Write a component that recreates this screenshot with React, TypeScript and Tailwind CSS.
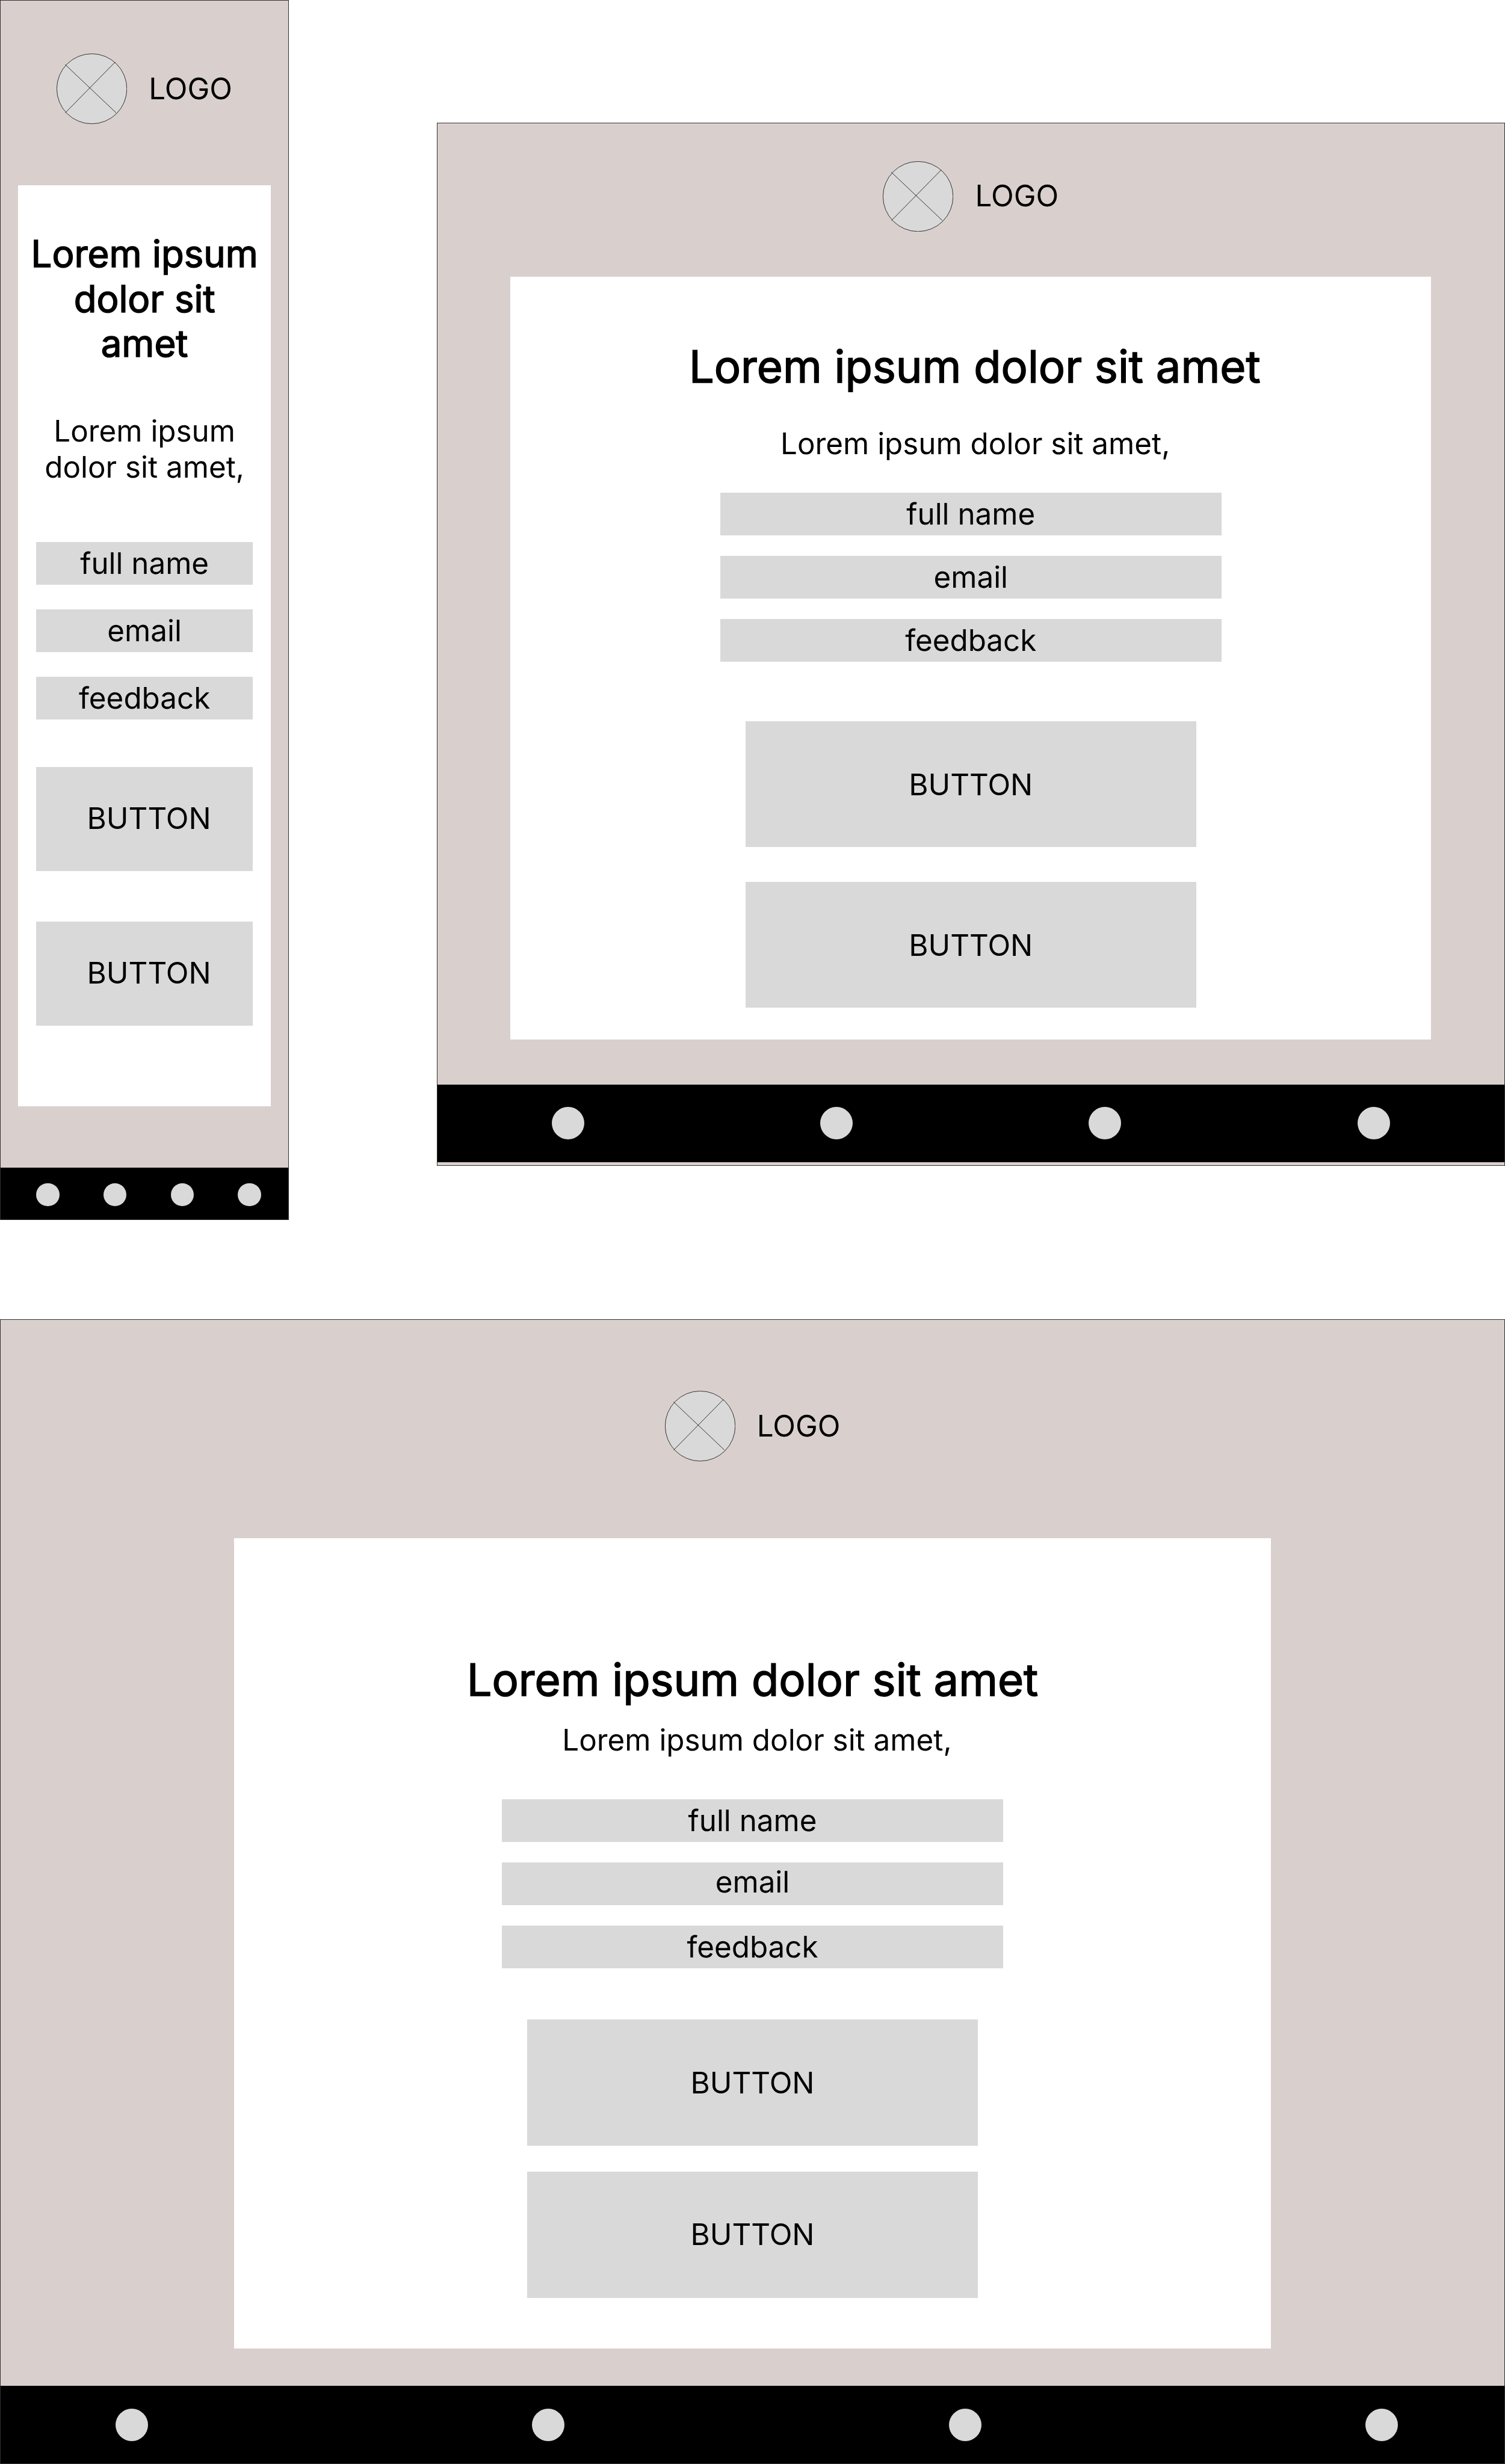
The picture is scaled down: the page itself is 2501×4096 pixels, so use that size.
type ScreenClasses = {
  frame: string;
  header: string;
  card: string;
  title: string;
  text: string;
  fields: string;
  buttons: string;
  button: string;
  footer: string;
  dot: string;
  labels: [string, string, string];
};

const mobile: ScreenClasses = {
  frame: "w-[480.3px] h-[2027.6px]",
  header: "h-[308.4px] pt-[89.4px]",
  card: "w-[420.2px] h-[1531.1px] pt-[76.7px]",
  title: "w-[384px] text-[61.68px] leading-[74.63px]",
  text: "mt-[78px] w-[360px]",
  fields: "mt-[94.8px] w-[360px] gap-[40.9px]",
  buttons: "mt-[79.4px] w-[360px] gap-[84.6px]",
  button: "h-[172.8px] pl-[15px] pb-[1px]",
  footer: "mt-[101.8px] h-[86.3px] pt-[25.4px] pl-[60.1px] gap-[73.3px]",
  dot: "size-[38.5px]",
  labels: ["pt-[1px]", "pt-[1px]", "pt-[1px]"],
};

const tablet: ScreenClasses = {
  frame: "mt-[203.5px] w-[1775.5px] h-[1734.7px]",
  header: "h-[256px] pt-[64px]",
  card: "w-[1529.6px] h-[1268.2px] pt-[105.6px]",
  title: "pl-[13px] text-[74.01px] leading-[89.6px]",
  text: "mt-[53px] pl-[15px]",
  fields: "mt-[52px] w-[832.6px] gap-[33.9px]",
  buttons: "mt-[99px] w-[749.4px] gap-[57.5px]",
  button: "h-[209.5px] pt-[3px]",
  footer: "mt-[75.1px] h-[129.4px] pt-[37.5px] pl-[191.2px] gap-[392.4px]",
  dot: "size-[54px]",
  labels: ["pt-[1px]", "pt-[1px]", "pt-[1px]"],
};

const desktop: ScreenClasses = {
  frame: "mt-[165.8px] w-full h-[1902.6px]",
  header: "h-[363.7px] pt-[119px]",
  card: "w-[1723.9px] h-[1347.1px] pt-[190.6px]",
  title: "text-[74.01px] leading-[89.6px]",
  text: "mt-[25.3px] pl-[15px]",
  fields: "mt-[69px] w-[832.6px] gap-[33.9px]",
  buttons: "mt-[85.5px] w-[749.4px] gap-[43.2px]",
  button: "h-[209.6px] pt-[1px]",
  footer: "mt-[61.6px] h-[130.2px] pt-[37.8px] pl-[192px] gap-[638.4px]",
  dot: "size-[54px]",
  labels: ["pt-[1px]", "pb-[5px]", "pt-[1px]"],
};

function Logo() {
  return (
    <div className="flex w-[292px] items-start">
      <svg viewBox="0 0 152 152" className="size-[117.2px] shrink-0" stroke="#000" strokeWidth="1">
        <circle cx="76" cy="76" r="75.5" fill="#d9d9d9" />
        <path d="M18.4 23.6 128.6 128M18.6 128 126 18.7" fill="none" />
      </svg>
      <span className="mt-[28.8px] ml-[36px]">LOGO</span>
    </div>
  );
}

function Screen({ c, labels }: { c: ScreenClasses; labels: string[] }) {
  return (
    <section
      className={`flex shrink-0 flex-col items-center bg-[#d9d0ce] outline-1 -outline-offset-1 outline-[#323030] ${c.frame}`}
    >
      <header className={`flex w-full shrink-0 justify-center ${c.header}`}>
        <Logo />
      </header>
      <main className={`flex shrink-0 flex-col items-center bg-white text-center ${c.card}`}>
        <h1 className={`[-webkit-text-stroke:1.54px_#000] ${c.title}`}>Lorem ipsum dolor sit amet</h1>
        <p className={c.text}>Lorem ipsum dolor sit amet,</p>
        <div className={`flex flex-col ${c.fields}`}>
          {labels.map((label, i) => (
            <div
              key={label}
              className={`flex h-[70.9px] items-center justify-center bg-[#d9d9d9] ${c.labels[i]}`}
            >
              {label}
            </div>
          ))}
        </div>
        <div className={`flex flex-col ${c.buttons}`}>
          {[0, 1].map((n) => (
            <button key={n} className={`flex items-center justify-center bg-[#d9d9d9] ${c.button}`}>
              BUTTON
            </button>
          ))}
        </div>
      </main>
      <footer className={`flex w-full shrink-0 items-start bg-black ${c.footer}`}>
        {[0, 1, 2, 3].map((n) => (
          <span key={n} className={`shrink-0 rounded-full bg-[#d9d9d9] ${c.dot}`} />
        ))}
      </footer>
    </section>
  );
}

const labels = ["full name", "email", "feedback"];

export default function App() {
  return (
    <div className="h-[4096px] w-[2501px] overflow-hidden bg-white font-['Inter',sans-serif] text-[49.34px] leading-[59.71px] text-black [text-rendering:geometricPrecision]">
      <div className="flex items-start justify-between">
        <Screen c={mobile} labels={labels} />
        <Screen c={tablet} labels={labels} />
      </div>
      <Screen c={desktop} labels={labels} />
    </div>
  );
}
